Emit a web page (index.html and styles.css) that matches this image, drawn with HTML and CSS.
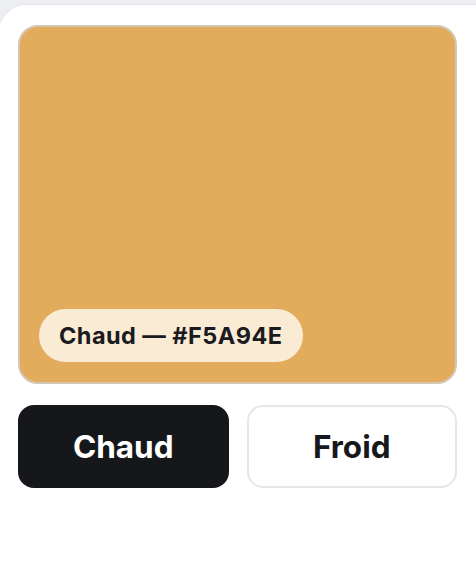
FILE: index.html
```html
<!DOCTYPE html>
<html lang="fr">
<head>
<meta charset="utf-8">
<link rel="stylesheet" href="styles.css">
</head>
<body>
<div class="card">
  <div class="swatch">
    <span class="label">Chaud — #F5A94E</span>
  </div>
  <div class="toggles">
    <button class="btn active">Chaud</button>
    <button class="btn">Froid</button>
  </div>
</div>
</body>
</html>
```

FILE: styles.css
```css
html, body {
  margin: 0;
  padding: 0;
  background: #eceef1;
  font-family: Inter, "Noto Sans", sans-serif;
  overflow: hidden;
}
body {
  width: 476px;
  height: 583px;
  padding-top: 4px;
  box-sizing: border-box;
}
.card {
  width: 478px;
  height: 579px;
  margin-left: -2px;
  background: #ffffff;
  border: 1px solid #e3e5e8;
  border-right: 0;
  border-bottom: 0;
  border-radius: 28px 0 0 0;
  padding: 20px 0 0 19px;
  box-sizing: border-box;
}
.swatch {
  width: 439px;
  height: 359px;
  box-sizing: border-box;
  background: #e2ac5c;
  border: 2px solid #d3c6b3;
  border-radius: 20px;
  display: flex;
  align-items: flex-end;
  padding: 0 0 20px 19px;
}
.label {
  display: inline-flex;
  align-items: center;
  height: 53px;
  padding: 0 20px;
  border-radius: 27px;
  background: #faebd5;
  color: #1b1b1f;
  font-weight: 700;
  font-size: 23.5px;
  letter-spacing: 0.45px;
}
.toggles {
  width: 439px;
  margin-top: 21px;
  display: grid;
  grid-template-columns: 1fr 1fr;
  gap: 18px;
}
.btn {
  height: 83px;
  border-radius: 16px;
  border: 2px solid #e6e6e8;
  background: #ffffff;
  color: #17181c;
  font-family: Inter, "Noto Sans", sans-serif;
  font-weight: 700;
  font-size: 31.5px;
  padding: 0;
}
.btn.active {
  background: #16171b;
  border-color: #16171b;
  color: #ffffff;
}
```
